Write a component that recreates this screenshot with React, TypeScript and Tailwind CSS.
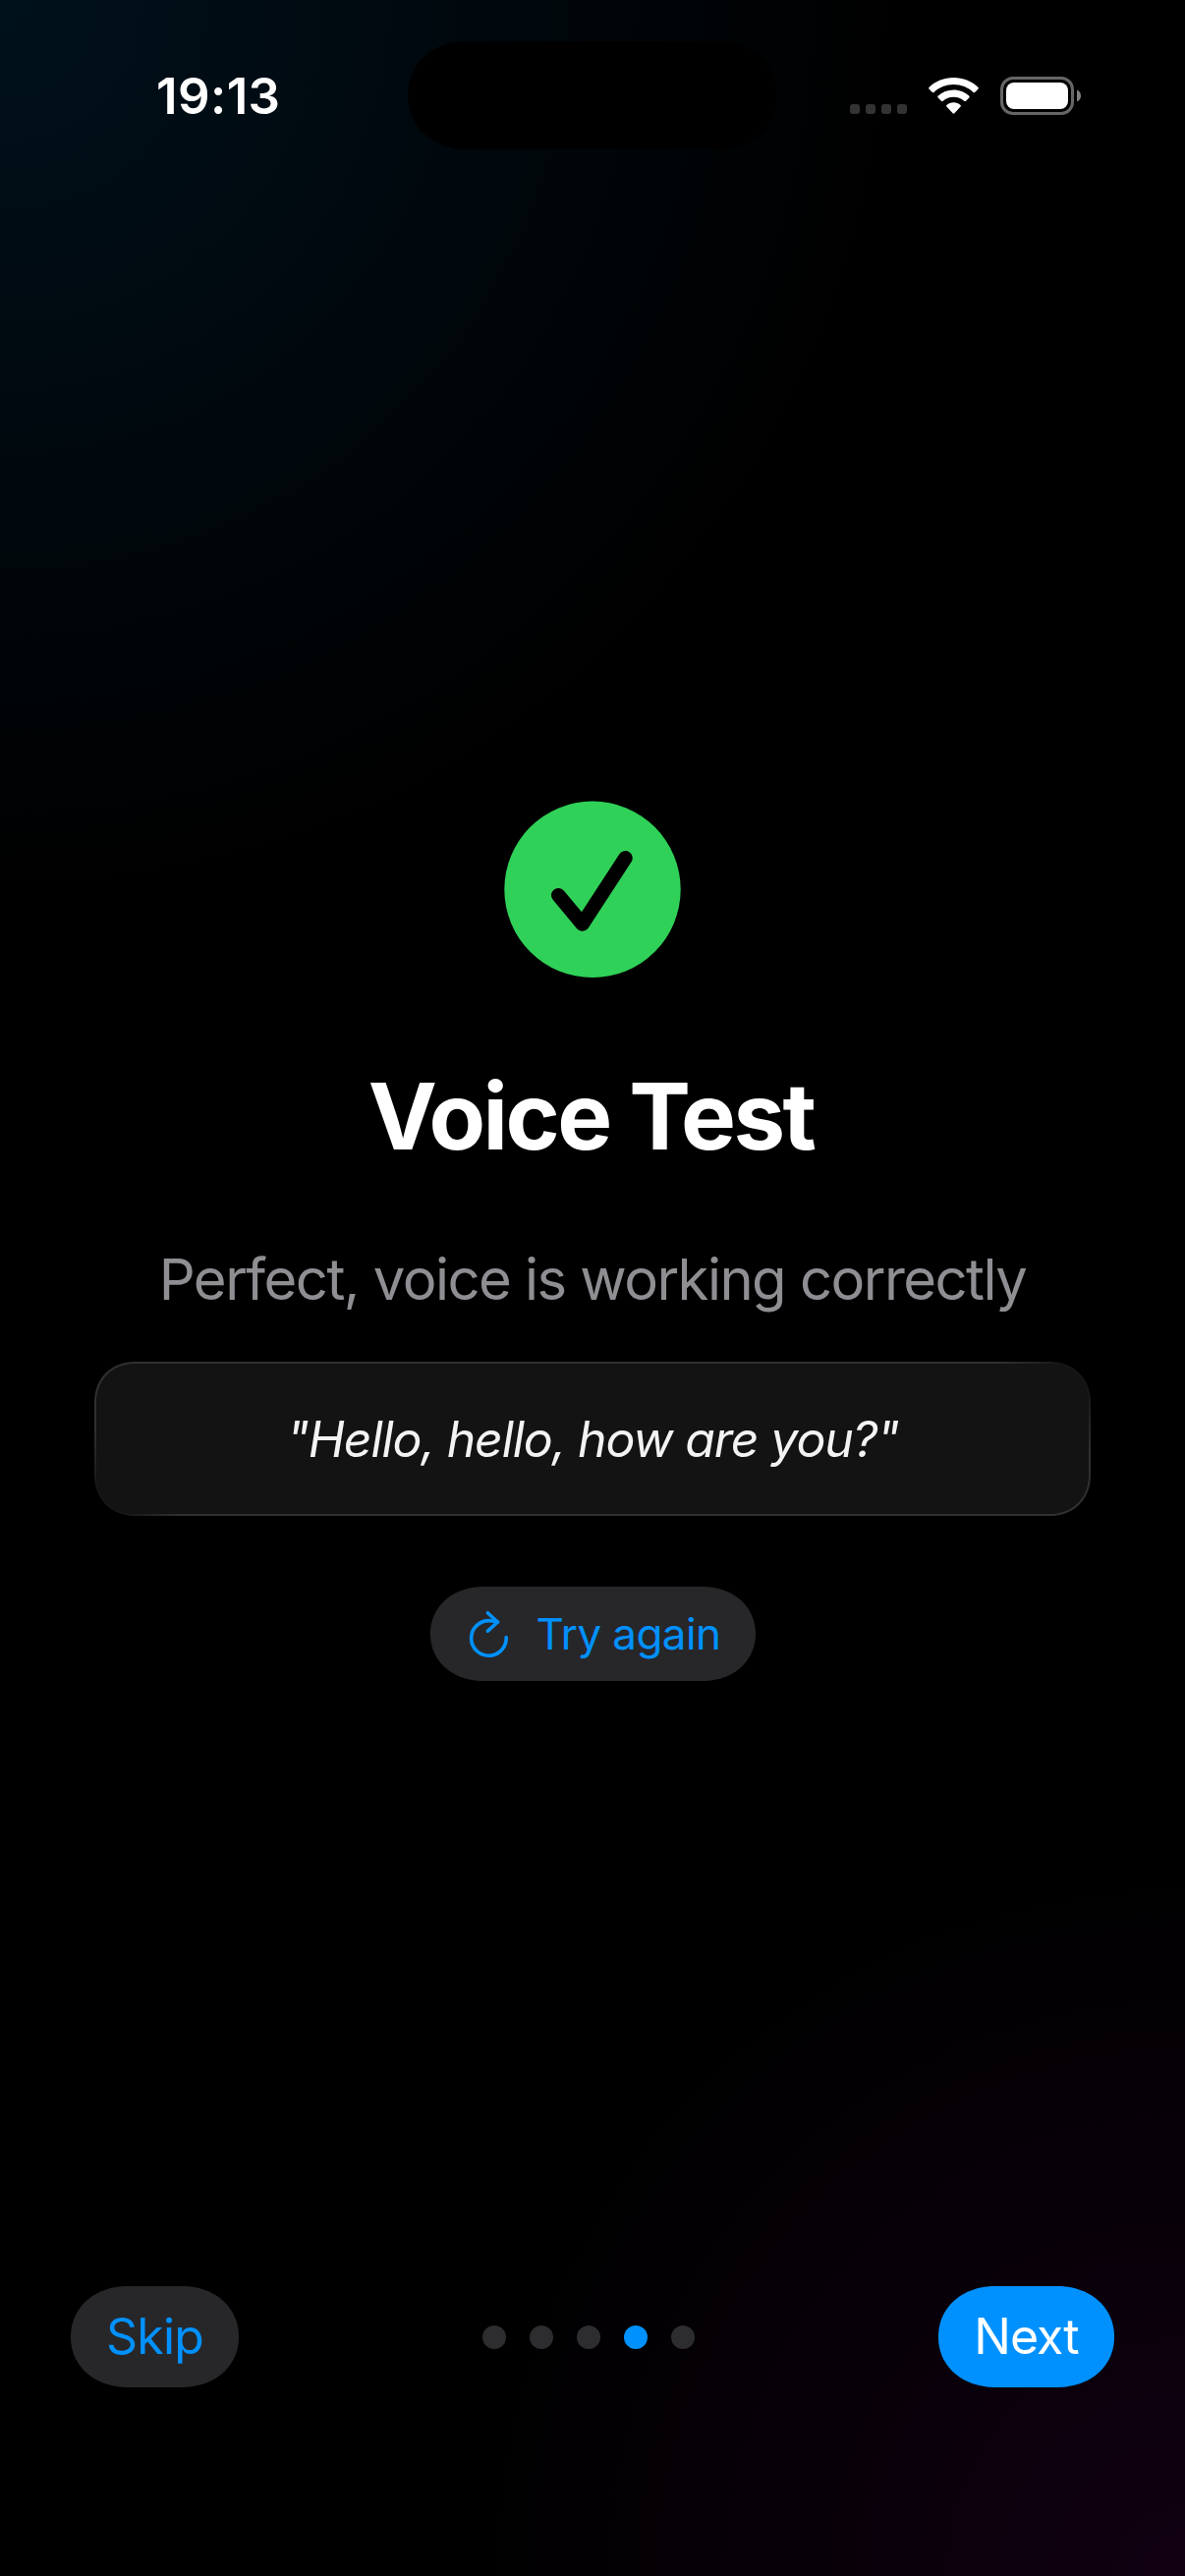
import { clsx } from 'clsx';

const STEPS = 5;
const CURRENT_STEP = 3;

function StatusBar() {
  return (
    <header className="flex h-[194px] items-start pr-[106px] pl-[159px] text-white">
      <span className="mt-[68px] w-[256px] text-[51px] leading-[60px] font-semibold tracking-[0.4px]">
        19:13
      </span>
      <div className="mt-[42px] h-[110px] w-[376px] rounded-[60px/55px] bg-black [corner-shape:superellipse(1.06)]" />
      <div className="mt-[78px] ml-auto flex items-start">
        <div className="mt-[28px] flex gap-1.5">
          {[0, 1, 2, 3].map((i) => (
            <span key={i} className="size-2.5 rounded-[3px] bg-[#333333]" />
          ))}
        </div>
        <svg className="mt-px ml-[22px] h-[37px] w-[51px]" viewBox="0 0 51 37" fill="white">
          <path d="M25.5 0C35 0 43.8 3.6 50.4 9.7c.6.6.6 1.3.1 1.9l-3.1 3.2c-.5.6-1.3.6-1.9.1C40.1 9.9 33.1 7.1 25.5 7.1S10.9 9.9 5.5 14.9c-.6.5-1.4.5-1.9-.1L.5 11.6C0 11 0 10.3.6 9.7 7.2 3.6 16 0 25.5 0z" />
          <path d="M25.5 12.6c6 0 11.5 2.3 15.7 6 .6.6.6 1.3.1 1.9l-3.2 3.2c-.5.6-1.3.6-1.9.1-2.9-2.5-6.6-4-10.7-4s-7.8 1.5-10.7 4c-.6.5-1.4.5-1.9-.1l-3.2-3.2c-.5-.6-.5-1.3.1-1.9 4.2-3.7 9.7-6 15.7-6z" />
          <path d="M25.5 25.3c2.7 0 5.1 1 7 2.6.6.5.6 1.2.1 1.700l-6.200 6.600c-.5.600-1.300.600-1.800 0l-6.200-6.600c-.5-.5-.5-1.200.1-1.700 1.900-1.600 4.300-2.600 7-2.600z" />
        </svg>
        <svg className="ml-[22px] h-[39px] w-[82px]" viewBox="0 0 82 39" fill="none">
          <rect x="1.5" y="1.5" width="72" height="36" rx="11.5" stroke="#666666" strokeWidth="3" />
          <rect x="6" y="6" width="63" height="27" rx="8" fill="white" />
          <path d="M78 13.5c2.500 1 4 3.300 4 6s-1.500 5-4 6z" fill="#808080" />
        </svg>
      </div>
    </header>
  );
}

function CheckBadge() {
  return (
    <svg className="size-[180px]" viewBox="0 0 180 180" fill="none">
      <circle cx="90" cy="90.3" r="89.7" fill="#30D158" />
      <path
        d="M55.2 96.2L79.7 125.5L123.5 58.3"
        stroke="black"
        strokeWidth="14.5"
        strokeLinecap="round"
        strokeLinejoin="round"
      />
    </svg>
  );
}

function RetryIcon() {
  return (
    <svg
      className="h-[48px] w-[40px]"
      viewBox="0 0 40 48"
      fill="none"
      stroke="#0091FF"
      strokeWidth="3.6"
      strokeLinecap="round"
      strokeLinejoin="round"
    >
      <path d="M38.2 27.6A17.8 17.8 0 1 1 20.5 10.6Q25 10.6 29.5 12" />
      <path d="M19.4 2.7L29.5 12L19.4 21.2" />
    </svg>
  );
}

export default function App() {
  return (
    <div className="flex h-[2622px] w-[1206px] flex-col overflow-hidden bg-black bg-[radial-gradient(circle_900px_at_0_0,#00111c,transparent),radial-gradient(circle_740px_at_100%_100%,#110012,#070008_55%,transparent)] font-[Inter,'Liberation_Sans',sans-serif]">
      <StatusBar />

      <main className="flex flex-1 flex-col items-center px-24 pt-[621px]">
        <CheckBadge />
        <h1 className="mt-[83px] pr-[3px] text-[94px] leading-[116px] font-bold tracking-[-2.6px] text-white">
          Voice Test
        </h1>
        <p className="mt-[72px] text-[58px] leading-[72px] tracking-[-1.55px] whitespace-nowrap text-[#8E8E93]">
          Perfect, voice is working correctly
        </p>
        {/* Border fades out at the top right and bottom left corners */}
        <div className="mt-12 w-full rounded-[42px] bg-[#303030] bg-[radial-gradient(circle_90px_at_100%_0,#161616_30%,transparent),radial-gradient(circle_90px_at_0_100%,#161616_30%,transparent)] p-[2px] [corner-shape:superellipse(1.1)]">
          <div className="flex h-[153px] items-center justify-center rounded-[40px] bg-[#131313] [corner-shape:superellipse(1.1)]">
            <span className="text-[50px] leading-[60px] tracking-[-1.1px] text-[#F3F3F3] italic">
              "Hello, hello, how are you?"
            </span>
          </div>
        </div>
        <button className="mt-[72px] flex h-24 w-[331px] items-center gap-[29px] rounded-[54px/48px] bg-[#272729] pl-[39px] text-[44px] tracking-[-0.6px] whitespace-nowrap text-[#0091FF] [corner-shape:superellipse(1.06)]">
          <RetryIcon />
          Try again
        </button>
      </main>

      <footer className="flex h-[295px] items-start justify-between px-[72px]">
        <button className="h-[103px] w-[171px] rounded-[58px/51px] bg-[#272729] text-[50px] tracking-[-0.8px] text-[#0091FF] [corner-shape:superellipse(1.06)]">
          Skip
        </button>
        <div className="mt-10 flex gap-6">
          {Array.from({ length: STEPS }, (_, i) => (
            <span
              key={i}
              className={clsx('size-6 rounded-full', i === CURRENT_STEP ? 'bg-[#0091FF]' : 'bg-[#2D2C2F]')}
            />
          ))}
        </div>
        <button className="h-[103px] w-[179px] rounded-[58px/51px] bg-[#0091FF] text-[50px] tracking-[-1px] text-white [corner-shape:superellipse(1.06)]">
          Next
        </button>
      </footer>
    </div>
  );
}
